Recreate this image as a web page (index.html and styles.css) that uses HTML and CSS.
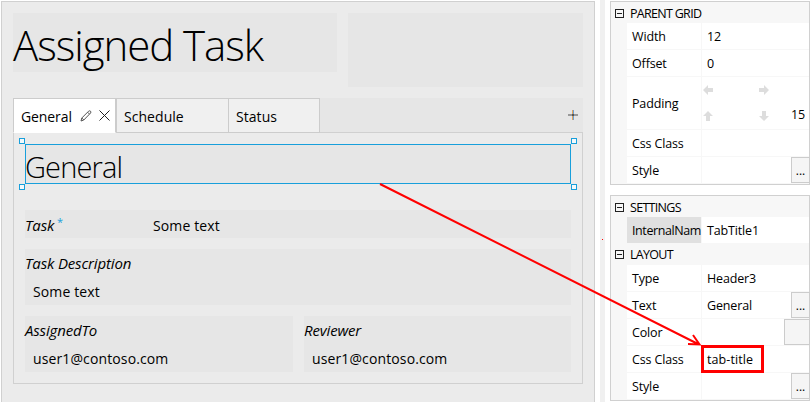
FILE: index.html
```html
<!DOCTYPE html>
<html lang="en">
<head>
<meta charset="utf-8">
<title>Assigned Task</title>
<link rel="stylesheet" href="styles.css">
</head>
<body>
<div class="app">
  <main class="form">
    <div class="top">
      <h1 class="title">Assigned Task</h1>
      <div class="placeholder"></div>
    </div>
    <div class="tabs">
      <div class="tab active"><span>General</span>
        <svg class="pencil" width="12" height="12" viewBox="0 0 12 12"><path d="M1 11l.8-3L8.600 1.200q1-.8 1.900 0t0 1.900L3.800 10zM1.800 8l2 2M7.600 2.200l1.900 1.900"/></svg>
        <svg class="close" width="11" height="11" viewBox="0 0 11 11"><path d="M.5.5l10 10M10.500.5l-10 10"/></svg>
      </div>
      <div class="tab second"><span>Schedule</span></div>
      <div class="tab third"><span>Status</span></div>
      <div class="strip"><svg width="10" height="10" viewBox="0 0 10 10" shape-rendering="crispEdges"><path fill="#e5a35a" d="M4 0h1v10H4z"/><path fill="#6ba0d4" d="M5 0h1v10H5z"/><path fill="#999" d="M0 4h10v2H0z"/><path fill="#555" d="M4 4h2v2H4z"/></svg></div>
    </div>
    <section class="panel">
      <div class="selected"><h3>General</h3><i class="handle tl"></i><i class="handle tr"></i><i class="handle bl"></i><i class="handle br"></i></div>
      <div class="field inline"><em>Task</em><sup>*</sup><span class="value">Some text</span></div>
      <div class="field stacked"><em>Task Description</em><span class="value">Some text</span></div>
      <div class="pair">
        <div class="field stacked"><em>AssignedTo</em><span class="value">user1@contoso.com</span></div>
        <div class="field stacked"><em>Reviewer</em><span class="value">user1@contoso.com</span></div>
      </div>
    </section>
  </main>
  <div class="splitter"></div>
  <aside class="props">
    <div class="grid">
      <div class="group"><i class="toggle"></i><span>PARENT GRID</span></div>
      <div class="row"><div class="name">Width</div><div class="val">12</div></div>
      <div class="row"><div class="name">Offset</div><div class="val">0</div></div>
      <div class="row tall"><div class="name">Padding</div>
        <div class="val pad">
          <svg class="arrow left" viewBox="0 0 10 10"><path d="M0 5l5-5v3h5v4H5v3z"/></svg>
          <svg class="arrow right" viewBox="0 0 10 10"><path d="M10 5L5 0v3H0v4h5v3z"/></svg>
          <svg class="arrow up" viewBox="0 0 10 10"><path d="M5 0l5 5H7v5H3V5H0z"/></svg>
          <svg class="arrow down" viewBox="0 0 10 10"><path d="M5 10l5-5H7V0H3v5H0z"/></svg>
          <span class="num">15</span>
        </div></div>
      <div class="row"><div class="name">Css Class</div><div class="val"></div></div>
      <div class="row"><div class="name">Style</div><div class="val"></div><button class="more">...</button></div>
    </div>
    <div class="grid">
      <div class="group"><i class="toggle"></i><span>SETTINGS</span></div>
      <div class="row current"><div class="name">InternalNam</div><div class="val">TabTitle1</div></div>
      <div class="group second-group"><i class="toggle"></i><span>LAYOUT</span></div>
      <div class="row"><div class="name">Type</div><div class="val">Header3</div></div>
      <div class="row"><div class="name">Text</div><div class="val">General</div><button class="more">...</button></div>
      <div class="row"><div class="name">Color</div><div class="val"></div><button class="more wide"></button></div>
      <div class="row"><div class="name">Css Class</div><div class="val tabtitle">tab-title</div></div>
      <div class="row"><div class="name">Style</div><div class="val"></div><button class="more">...</button></div>
    </div>
  </aside>
  <svg class="callout" width="811" height="402" viewBox="0 0 811 402"><path d="M380 184L699 344.500M693 335l6.500 9.500-11.500-.5" fill="none" stroke="#f00" stroke-width="2"/><path d="M702.500 346.500h60v25h-60z" fill="none" stroke="#f00" stroke-width="3"/><path d="M602 239h1v1h-1z" fill="#f00"/></svg>
</div>
</body>
</html>
```
FILE: styles.css
```css
* { box-sizing: border-box; }
body { margin: 0; background: #fff; color: #000; font-family: "Open Sans", "Noto Sans", sans-serif; font-size: 14px; }
h1, h3 { margin: 0; font-weight: 300; }
svg { display: block; }
.app { position: relative; display: flex; width: 811px; height: 402px; overflow: hidden; }

.form { width: 594px; height: 420px; margin: 1px 0 0 1px; padding: 11px 10px 0 11px; border: 1px solid #d0d0d0; background: #ebebeb; }
.top { display: flex; gap: 11px; height: 85px; }
.title { width: 324px; height: 59px; background: #e6e6e6; font-size: 42px; line-height: 64px; letter-spacing: -1.05px; white-space: nowrap; }
.placeholder { width: 235px; height: 74px; background: #e6e6e6; }

.tabs { display: flex; height: 34px; width: 570px; }
.tab { display: flex; align-items: center; height: 35px; padding: 2px 0 0 7px; border: 1px solid #ccc; background: #f0f0f0; letter-spacing: .05px; }
.tab.active { width: 103px; height: 35px; background: #fff; border-bottom-color: #fff; position: relative; z-index: 1; letter-spacing: -.1px; }
.second { width: 113px; }
.third { width: 91px; border-left: 0; }
.tab svg { flex: none; fill: none; stroke: #222; stroke-width: 1; }
.tab .pencil { margin: -2px 0 0 8px; stroke: #555; }
.tab .close { margin: -2px 0 0 7px; }
.strip { flex: 1; display: flex; justify-content: flex-end; padding: 12px 5px 0 0; background: #e6e6e6; }

.panel { width: 570px; height: 252px; padding: 11px; border: 1px solid #d0d0d0; }
.selected { position: relative; width: 546px; height: 40px; border: 1px solid #189fdb; background: #e6e6e6; }
h3 { margin-left: -1px; font-size: 29px; line-height: 43px; letter-spacing: -.85px; }
.handle { position: absolute; width: 6px; height: 6px; border: 1px solid #189fdb; background: #f4f9fb; }
.tl { left: -7px; top: -7px; }
.tr { right: -7px; top: -7px; }
.bl { left: -7px; bottom: -7px; }
.br { right: -7px; bottom: -7px; }
.field { background: #e6e6e6; }
.field em { font-size: 15px; letter-spacing: -.15px; }
.value { letter-spacing: .12px; }
.inline { display: grid; grid-template-columns: 32px 96px 1fr; height: 28px; margin: 26px 0 11px; line-height: 31px; }
.inline sup { color: #189fdb; font-size: 11px; line-height: 24px; vertical-align: baseline; }
.stacked { display: flex; flex-direction: column; height: 56px; line-height: 28px; }
.stacked .value { margin: 1px 0 0 8px; }
.pair { display: grid; grid-template-columns: 268px 267px; gap: 11px; margin-top: 11px; }

.splitter { width: 5px; margin-left: 5px; background: #f0f0f0; }
.props { width: 200px; margin: 1px 0 0 5px; }
.grid { width: 200px; border: 1px solid #d0d0d0; background: #f7f7f7; margin-bottom: 10px; font-size: 12.5px; letter-spacing: -.15px; }
.group { display: flex; align-items: center; height: 21px; padding: 2px 0 0 4px; gap: 6px; letter-spacing: -.7px; }
.second-group { height: 22px; padding-top: 0; }
.toggle { width: 9px; height: 9px; border: 1px solid #222; padding: 3px 1px; background: #222 content-box; }
.row { display: grid; grid-template-columns: 74px 107px; column-gap: 1px; position: relative; height: 27px; margin-left: 16px; line-height: 27px; border-bottom: 1px solid #f7f7f7; }
.name, .val { background: #fff; overflow: hidden; white-space: nowrap; }
.name { padding-left: 5px; }
.val { padding-left: 5px; }
.tabtitle { letter-spacing: .1px; }
.tall { height: 53px; line-height: 53px; }
.current { height: 26px; border: 0; line-height: 27px; }
.current .name { background: #e0e0e0; letter-spacing: -.4px; }
.more { position: absolute; right: -1px; top: 0; width: 19px; height: 26px; padding: 0; border: 1px solid #ccc; background: #f5f5f5; color: #000; font: 12px/26px "Open Sans", sans-serif; }
.more.wide { width: 26px; }
.pad { display: grid; grid-template-columns: 56px 33px 1fr; grid-template-rows: 26px 26px; padding: 0; line-height: 26px; }
.arrow { width: 10px; height: 10px; fill: #ddd; align-self: center; margin-left: 1px; }
.up { grid-area: 2 / 1; }
.down { grid-area: 2 / 2; }
.pad .num { grid-area: 2 / 3; line-height: 24px; }
.callout { position: absolute; left: 0; top: 0; }
```
